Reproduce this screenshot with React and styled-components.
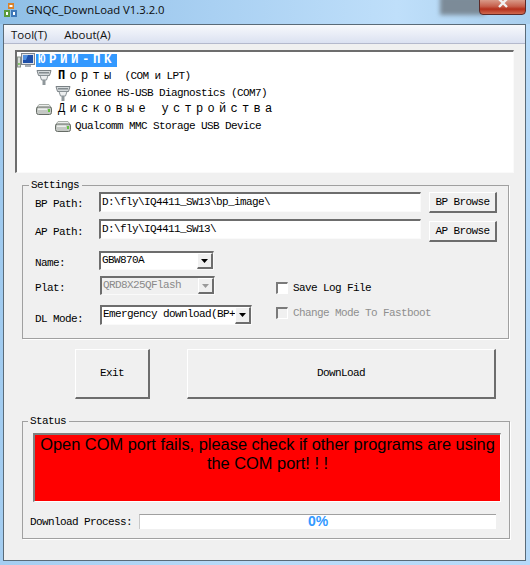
import React from "react";
import styled, { createGlobalStyle, css } from "styled-components";

const GlobalStyle = createGlobalStyle`
  html, body { margin: 0; padding: 0; }
  body { width: 530px; height: 565px; overflow: hidden; background: #b4d8f8; }
  * { box-sizing: border-box; }
`;

const monoText = css`
  font-family: "Liberation Mono", "DejaVu Sans Mono", monospace;
  font-size: 11px;
  letter-spacing: -0.6px;
  color: #000;
  white-space: nowrap;
`;

const sunken = css`
  border-style: solid;
  border-width: 2px 1px 1px 2px;
  border-color: #6d6d6d #fafafa #fafafa #6d6d6d;
`;

const raised = css`
  border-style: solid;
  border-width: 1px 2px 2px 1px;
  border-color: #fff #6d6d6d #6d6d6d #fff;
`;

const AppIcon = () => (
  <svg width="14" height="14" viewBox="0 0 14 14">
    <rect x="4" y="0" width="6" height="6" fill="#d9822b" />
    <rect x="0" y="7" width="6" height="7" fill="#5a9a3c" />
    <rect x="7" y="7" width="6" height="7" fill="#3f78b8" />
    <rect x="5.5" y="2" width="3" height="2" fill="#fff" />
    <rect x="2" y="9" width="2" height="3" fill="#fff" />
    <rect x="9" y="9" width="2" height="3" fill="#fff" />
  </svg>
);

const ComputerIcon = () => (
  <svg width="18" height="15" viewBox="0 0 18 15">
    <rect x="0.5" y="4" width="3" height="10" fill="#d8dcd8" stroke="#8a938a" />
    <rect x="1.2" y="10" width="1.5" height="2" fill="#6fbf4f" />
    <rect x="4.5" y="0.5" width="13" height="11" fill="#dfe3e8" stroke="#7d8690" />
    <rect x="6" y="2" width="10" height="8" fill="#1f4fa8" />
    <path d="M6 2h5l-2 5H6z" fill="#4f8fe0" />
    <rect x="8" y="12" width="6" height="2" fill="#aab0b6" />
  </svg>
);

const PortIcon = () => (
  <svg width="16" height="16" viewBox="0 0 16 16">
    <path d="M1 1.5h14l-1.5 5h-11z" fill="#d4d9db" stroke="#7a8185" />
    <rect x="3" y="3" width="10" height="1.5" fill="#848c90" />
    <path d="M4 6.5h8l-1.5 4.5h-5z" fill="#eceeef" stroke="#8a9296" />
    <rect x="6.5" y="11" width="3" height="5" fill="#8f979b" />
  </svg>
);

const DriveIcon = () => (
  <svg width="16" height="11" viewBox="0 0 16 11">
    <path d="M3 0.5h10l2.5 3.5h-15z" fill="#eceeec" stroke="#a8aea8" />
    <rect x="0.5" y="3" width="15" height="7.5" rx="2" fill="#c4c8c4" stroke="#666c66" />
    <rect x="2" y="4.5" width="9" height="1.5" fill="#eceeec" />
    <rect x="12" y="5" width="2" height="3" fill="#63c23f" />
  </svg>
);

const ArrowIcon = ({ color }) => (
  <svg width="7" height="4" viewBox="0 0 7 4">
    <path d="M0 0h7L3.5 4z" fill={color} />
  </svg>
);

const Combo = ({ value, disabled }) => (
  <ComboBox $disabled={disabled}>
    <ComboValue $disabled={disabled}>{value}</ComboValue>
    <ComboArrow>
      <ArrowIcon color={disabled ? "#9a9a9a" : "#000"} />
    </ComboArrow>
  </ComboBox>
);

export default function App() {
  return (
    <>
      <GlobalStyle />
      <Screen>
        <TitleBar>
          <AppIcon />
          <TitleText>GNQC_DownLoad V1.3.2.0</TitleText>
          <CloseShadow />
          <CloseButton>
            <svg width="10" height="9" viewBox="0 0 10 9">
              <path d="M1 -1L9 7M9 -1L1 7" stroke="#f2f2f2" strokeWidth="2.4" />
            </svg>
          </CloseButton>
        </TitleBar>
        <Window>
          <MenuBar>
            <MenuItem>Tool(T)</MenuItem>
            <MenuItem>About(A)</MenuItem>
          </MenuBar>
          <TreeBox>
            <TreeRow $level={0}>
              <ComputerIcon />
              <TreeRoot>ЮРИЙ-ПК</TreeRoot>
            </TreeRow>
            <TreeRow $level={1}>
              <PortIcon />
              <TreeLabel>
                <Spaced><b>П</b>орты</Spaced> (COM и LPT)
              </TreeLabel>
            </TreeRow>
            <TreeRow $level={2}>
              <PortIcon />
              <TreeLabel>Gionee HS-USB Diagnostics (COM7)</TreeLabel>
            </TreeRow>
            <TreeRow $level={1}>
              <DriveIcon />
              <TreeLabel><Spaced>Дисковые устройства</Spaced></TreeLabel>
            </TreeRow>
            <TreeRow $level={2}>
              <DriveIcon />
              <TreeLabel>Qualcomm MMC Storage USB Device</TreeLabel>
            </TreeRow>
          </TreeBox>

          <SettingsGroup>
            <Legend>Settings</Legend>
            <PathRow>
              <FieldLabel $drop={2}>BP Path:</FieldLabel>
              <PathInput>D:\fly\IQ4411_SW13\bp_image\</PathInput>
              <BrowseButton>BP Browse</BrowseButton>
            </PathRow>
            <PathRow>
              <FieldLabel $drop={3}>AP Path:</FieldLabel>
              <PathInput>D:\fly\IQ4411_SW13\</PathInput>
              <BrowseButton $nudge>AP Browse</BrowseButton>
            </PathRow>
            <OptionsArea>
              <ComboColumn>
                <ComboRow $height={19}>
                  <FieldLabel $drop={2}>Name:</FieldLabel>
                  <ComboSlot $width={115}>
                    <Combo value="GBW870A" />
                  </ComboSlot>
                </ComboRow>
                <ComboRow $height={19} $top={6}>
                  <FieldLabel $drop={2}>Plat:</FieldLabel>
                  <ComboSlot $width={115} $shift>
                    <Combo value="QRD8X25QFlash" disabled />
                  </ComboSlot>
                </ComboRow>
                <ComboRow $height={20} $top={10}>
                  <FieldLabel $drop={4}>DL Mode:</FieldLabel>
                  <ComboSlot $width={152} $shift>
                    <Combo value="Emergency download(BP+" />
                  </ComboSlot>
                </ComboRow>
              </ComboColumn>
              <CheckColumn>
                <CheckRow>
                  <CheckBox />
                  <CheckLabel>Save Log File</CheckLabel>
                </CheckRow>
                <CheckRow>
                  <CheckBox $disabled />
                  <CheckLabel $disabled>Change Mode To Fastboot</CheckLabel>
                </CheckRow>
              </CheckColumn>
            </OptionsArea>
          </SettingsGroup>

          <ActionRow>
            <ActionButton $width={75}>Exit</ActionButton>
            <ActionButton $width={309}>DownLoad</ActionButton>
          </ActionRow>

          <StatusGroup>
            <Legend $left={5}>Status</Legend>
            <StatusMessage>
              Open COM port fails, please check if other programs are using the COM port! ! !
            </StatusMessage>
            <ProgressRow>
              <ProgressLabel>Download Process:</ProgressLabel>
              <ProgressBar>0%</ProgressBar>
            </ProgressRow>
          </StatusGroup>
        </Window>
      </Screen>
    </>
  );
}

const Screen = styled.div`
  width: 530px;
  height: 565px;
  padding-left: 3px;
  background: linear-gradient(100deg, #9cc8ee 0%, #b9dbf8 55%, #b6daf9 100%);
  overflow: hidden;
`;

const TitleBar = styled.div`
  position: relative;
  height: 24px;
  display: flex;
  align-items: center;
  gap: 8px;
  margin-left: -3px;
  padding: 0 0 5px 4px;
  background: linear-gradient(90deg, #8fbfe6 0%, #a9d0f2 40%, #bfdffa 75%, #a9cfee 100%);
`;

const TitleText = styled.div`
  font-family: "Open Sans", "Noto Sans", sans-serif;
  font-size: 11.3px;
  color: #0c0c0c;
  white-space: nowrap;
`;

const CloseShadow = styled.div`
  position: absolute;
  top: -4px;
  left: 440px;
  width: 45px;
  height: 19px;
  background: #7c8b98;
  filter: blur(2px);
`;

const CloseButton = styled.div`
  position: absolute;
  top: -1px;
  left: 479px;
  width: 47px;
  height: 16px;
  display: flex;
  justify-content: center;
  background: linear-gradient(#d99a88 0%, #c6604c 45%, #b5301c 65%, #d06a50 100%);
  border: 1px solid #5c2a28;
  border-radius: 0 0 4px 4px;
`;

const Window = styled.div`
  width: 523px;
  height: 537px;
  background: #f0f0f0;
  border: 1px solid #5a6b78;
`;

const MenuBar = styled.div`
  height: 19px;
  display: flex;
  align-items: center;
  gap: 17px;
  padding-left: 7px;
  background: linear-gradient(#f7f9fc, #dbe1f1);
  border-bottom: 1px solid #b4b9cc;
`;

const MenuItem = styled.div`
  font-family: "Open Sans", "Noto Sans", sans-serif;
  font-size: 11.5px;
  color: #111;
`;

const TreeBox = styled.div`
  height: 123px;
  margin: 6px 11px 0;
  background: #fff;
  ${sunken}
`;

const indent = { 0: 0, 1: 19, 2: 38 };

const TreeRow = styled.div`
  height: 16.5px;
  display: flex;
  align-items: center;
  gap: ${(p) => (p.$level === 0 ? "1px" : p.$level === 1 ? "6px" : "4px")};
  padding-left: ${(p) => indent[p.$level]}px;
`;

const TreeLabel = styled.div`
  ${monoText}
  line-height: 13px;
`;

const Spaced = styled.span`
  font-size: 12px;
  letter-spacing: 4.3px;
  margin-right: 3px;
`;

const TreeRoot = styled.div`
  ${monoText}
  height: 13px;
  line-height: 13px;
  padding: 0 2px;
  font-size: 12.5px;
  font-weight: 700;
  letter-spacing: 3.5px;
  color: #fff;
  background: #3399ff;
`;

const Group = styled.div`
  position: relative;
  border: 1px solid #a0a0a0;
  box-shadow: 1px 1px 0 #fff;
`;

const SettingsGroup = styled(Group)`
  height: 154px;
  margin: 12px 16px 0 18px;
  padding: 6px 0 0 12px;
`;

const StatusGroup = styled(Group)`
  height: 118px;
  margin: 22px 15px 0 18px;
  padding: 11px 0 0 7px;
`;

const Legend = styled.div`
  ${monoText}
  position: absolute;
  top: -7px;
  left: ${(p) => p.$left || 6}px;
  padding: 0 3px 0 2px;
  line-height: 13px;
  background: #f0f0f0;
`;

const PathRow = styled.div`
  height: 20px;
  display: flex;
  align-items: flex-start;
  margin-bottom: 7px;
`;

const FieldLabel = styled.div`
  ${monoText}
  width: 64px;
  flex: none;
  padding-top: ${(p) => p.$drop || 0}px;
  line-height: 20px;
`;

const PathInput = styled.div`
  ${monoText}
  ${sunken}
  width: 322px;
  height: 20px;
  padding-left: 1px;
  line-height: 17px;
  background: #fff;
`;

const BrowseButton = styled.div`
  ${monoText}
  ${raised}
  width: 68px;
  height: 21px;
  margin: ${(p) => (p.$nudge ? "2px" : "0")} 0 0 8px;
  display: flex;
  align-items: center;
  justify-content: center;
  background: #f0f0f0;
`;

const OptionsArea = styled.div`
  display: flex;
  margin-top: 12px;
`;

const ComboColumn = styled.div`
  width: 241px;
  flex: none;
`;

const ComboRow = styled.div`
  display: flex;
  height: ${(p) => p.$height}px;
  margin-top: ${(p) => p.$top || 0}px;
`;

const ComboSlot = styled.div`
  width: ${(p) => p.$width}px;
  margin-left: ${(p) => (p.$shift ? "1px" : "0")};
`;

const ComboBox = styled.div`
  ${sunken}
  height: 100%;
  display: flex;
  justify-content: space-between;
  background: ${(p) => (p.$disabled ? "#f0f0f0" : "#fff")};
`;

const ComboValue = styled.div`
  ${monoText}
  flex: 1;
  min-width: 0;
  overflow: hidden;
  padding-left: 1px;
  line-height: 15px;
  color: ${(p) => (p.$disabled ? "#8a8a8a" : "#000")};
`;

const ComboArrow = styled.div`
  ${raised}
  width: 16px;
  flex: none;
  display: flex;
  align-items: center;
  justify-content: center;
  background: #f0f0f0;
`;

const CheckColumn = styled.div`
  display: flex;
  flex-direction: column;
  gap: 13px;
  padding-top: 31px;
`;

const CheckRow = styled.div`
  display: flex;
  align-items: center;
  gap: 5px;
  height: 12px;
`;

const CheckBox = styled.div`
  ${sunken}
  width: 12px;
  height: 12px;
  background: ${(p) => (p.$disabled ? "#f0f0f0" : "#fff")};
  border-color: #7a7a7a #fff #fff #7a7a7a;
`;

const CheckLabel = styled.div`
  ${monoText}
  color: ${(p) => (p.$disabled ? "#8f8f8f" : "#000")};
`;

const ActionRow = styled.div`
  display: flex;
  gap: 37px;
  margin: 10px 0 0 71px;
`;

const ActionButton = styled.div`
  ${monoText}
  ${raised}
  width: ${(p) => p.$width}px;
  height: 50px;
  padding-bottom: 2px;
  display: flex;
  align-items: center;
  justify-content: center;
  background: #f0f0f0;
`;

const StatusMessage = styled.div`
  ${sunken}
  width: 468px;
  height: 69px;
  margin-left: 3px;
  padding: 0;
  font-family: "Liberation Sans", Arial, sans-serif;
  font-size: 16.4px;
  line-height: 18.5px;
  text-align: center;
  color: #000;
  background: #f00;
  border-color: #808080 #fff #fff #808080;
`;

const ProgressRow = styled.div`
  display: flex;
  align-items: flex-start;
  margin-top: 12px;
`;

const ProgressLabel = styled.div`
  ${monoText}
  width: 109px;
  flex: none;
  line-height: 17px;
`;

const ProgressBar = styled.div`
  width: 357px;
  height: 15px;
  border-top: 1px solid #a0a0a0;
  border-left: 1px solid #c8c8c8;
  font-family: "Liberation Sans", Arial, sans-serif;
  font-size: 14px;
  font-weight: 700;
  line-height: 13px;
  text-align: center;
  color: #3399ff;
  background: #fff;
`;
